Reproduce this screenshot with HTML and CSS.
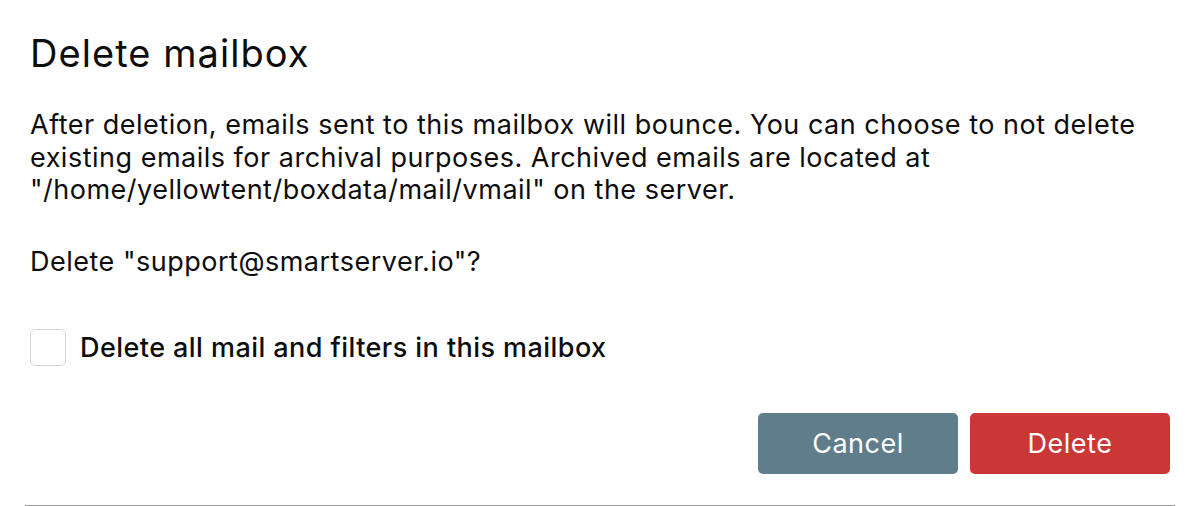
FILE: index.html
```html
<!DOCTYPE html>
<html>
<head>
<meta charset="utf-8">
<link rel="stylesheet" href="styles.css">
</head>
<body>
<div class="dialog">
  <div class="content">
    <h1 class="title">Delete mailbox</h1>
    <p class="text">After deletion, emails sent to this mailbox will bounce. You can choose to not delete existing emails for archival purposes. Archived emails are located at "/home/yellowtent/boxdata/mail/vmail" on the server.</p>
    <p class="text confirm">Delete "support@smartserver.io"?</p>
    <label class="check-row">
      <span class="checkbox"></span>
      <span class="check-label">Delete all mail and filters in this mailbox</span>
    </label>
    <div class="actions">
      <button class="btn btn-cancel">Cancel</button>
      <button class="btn btn-delete">Delete</button>
    </div>
  </div>
  <div class="footer-line"></div>
</div>
</body>
</html>
```

FILE: styles.css
```css
html, body {
  margin: 0;
  padding: 0;
  background: #fff;
}
body {
  font-family: Inter, "Noto Sans", sans-serif;
  color: #0d0d0d;
}
.dialog {
  padding: 0 25px;
}
.content {
  padding: 30px 5px 31px;
}
.title {
  margin: 0;
  font-size: 38px;
  line-height: 46px;
  font-weight: 400;
  letter-spacing: 1.05px;
}
.text {
  margin: 33px 0 0;
  font-size: 27px;
  line-height: 32.5px;
  letter-spacing: 0.5px;
}
.confirm {
  margin-top: 39px;
}
.check-row {
  display: flex;
  align-items: center;
  gap: 14px;
  margin-top: 51px;
}
.checkbox {
  width: 36px;
  height: 37px;
  border: 1.5px solid #d1d5db;
  border-radius: 5px;
  box-sizing: border-box;
  flex: none;
}
.check-label {
  font-size: 27px;
  font-weight: 500;
  letter-spacing: 0.44px;
}
.actions {
  display: flex;
  justify-content: flex-end;
  gap: 12px;
  margin-top: 47px;
}
.btn {
  width: 200px;
  height: 61px;
  border: none;
  border-radius: 5px;
  color: #fff;
  font-family: Inter, "Noto Sans", sans-serif;
  font-size: 27px;
  font-weight: 400;
  letter-spacing: 0.5px;
}
.btn-cancel {
  background: #607d8b;
}
.btn-delete {
  background: #cb3636;
}
.footer-line {
  height: 1px;
  background: #999;
}
```
